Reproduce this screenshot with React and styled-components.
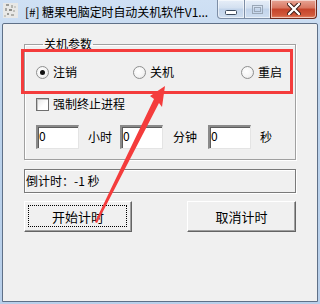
import React from "react";
import styled, { createGlobalStyle } from "styled-components";

const GlobalStyle = createGlobalStyle`
  html, body {
    margin: 0;
    padding: 0;
    background: #ffffff;
  }
  * {
    box-sizing: border-box;
  }
`;

const font = `"Noto Sans CJK SC", "Liberation Sans", sans-serif`;

// window frame
const Window = styled.div`
  position: relative;
  width: 320px;
  height: 304px;
  display: flex;
  flex-direction: column;
  background: linear-gradient(180deg, #cfe0f4 0%, #bcd3ec 30%, #b8cfea 100%);
  font-family: ${font};
  font-size: 12px;
  color: #000;
  overflow: hidden;
`;

const TitleBar = styled.div`
  height: 23px;
  display: flex;
  align-items: flex-start;
  flex-shrink: 0;
`;

const AppIcon = styled.div`
  width: 15px;
  height: 15px;
  margin: 3px 0 0 3px;
  display: flex;
`;

const Title = styled.div`
  margin-left: 7px;
  line-height: 24px;
  white-space: nowrap;
  letter-spacing: -0.1px;
`;

const Captions = styled.div`
  margin-left: auto;
  margin-right: 3px;
  display: flex;
`;

const CaptionButton = styled.div`
  width: ${(p) => p.$w}px;
  height: 19px;
  display: flex;
  align-items: center;
  justify-content: center;
  border: 1px solid #7d8ea6;
  border-top: none;
  margin-left: -1px;
  background: linear-gradient(180deg, #e6eef8 0%, #d3e0f0 45%, #c1d3ea 50%, #cfdef0 100%);
  border-radius: ${(p) => p.$radius || "0"};
  box-shadow: inset 0 0 0 1px rgba(255, 255, 255, 0.55);
`;

const CloseButton = styled(CaptionButton)`
  background: linear-gradient(180deg, #e7a596 0%, #d8755f 45%, #c5432a 50%, #d15a3c 85%, #e38a6c 100%);
  border-color: #6e2a1e;
`;

// client area
const Client = styled.div`
  flex: 1;
  margin: 0 2px 2px 2px;
  border: 1px solid #5f7087;
  border-radius: 2px 2px 0 0;
  background: #f0f0f0;
  padding: 13px 0 0 21px;
  display: flex;
  flex-direction: column;
`;

const Group = styled.fieldset`
  width: 272px;
  height: 123px;
  margin: 0;
  padding: 0 0 0 11px;
  border: 1px solid #a0a0a0;
  box-shadow: inset 1px 1px 0 #fff, 1px 1px 0 #fff;
  min-width: 0;
`;

const Legend = styled.legend`
  margin-left: 7px;
  padding: 0 1px;
  line-height: 14px;
  color: #000;
`;

const RadioRow = styled.div`
  margin-top: 14px;
  display: grid;
  grid-template-columns: 97px 108px auto;
  height: 14px;
  align-items: center;
`;

const Option = styled.label`
  display: flex;
  align-items: center;
  gap: 4px;
  line-height: 14px;
  white-space: nowrap;
`;

const RadioDot = styled.span`
  width: 13px;
  height: 13px;
  border-radius: 50%;
  border: 1px solid #8e8f8f;
  background: radial-gradient(circle at 40% 40%, #ffffff 0%, #f4f4f4 55%, #dcdcdc 100%);
  display: flex;
  align-items: center;
  justify-content: center;
  flex-shrink: 0;
  &::after {
    content: "";
    width: 5px;
    height: 5px;
    border-radius: 50%;
    background: ${(p) => (p.$checked ? "#111" : "transparent")};
  }
`;

const CheckRow = styled.div`
  margin-top: 18px;
  display: flex;
`;

const CheckBox = styled.span`
  width: 13px;
  height: 13px;
  border: 1px solid #6f6f6f;
  background: linear-gradient(135deg, #e6e6e6 0%, #ffffff 60%);
  box-shadow: inset 1px 1px 0 #c4c4c4;
  flex-shrink: 0;
`;

const TimeRow = styled.div`
  margin-top: 14px;
  display: flex;
  align-items: center;
`;

const Field = styled.div`
  width: 43px;
  height: 24px;
  background: #fff;
  border-top: 2px solid #8a8a8a;
  border-left: 2px solid #8a8a8a;
  border-right: 1px solid #e4e4e4;
  border-bottom: 1px solid #e4e4e4;
  box-shadow: inset 1px 1px 0 #5c5c5c;
  padding: 1px 0 0 1px;
  line-height: 16px;
  flex-shrink: 0;
`;

const Unit = styled.span`
  width: ${(p) => p.$w}px;
  padding-left: ${(p) => p.$pl}px;
  line-height: 14px;
  white-space: nowrap;
  flex-shrink: 0;
`;

const Status = styled.div`
  margin-top: 9px;
  width: 272px;
  height: 24px;
  border: 1px solid #7a7a7a;
  box-shadow: 1px 1px 0 #fff, inset 1px 1px 0 #fff;
  line-height: 22px;
  padding-left: 1px;
`;

const ButtonRow = styled.div`
  margin-top: 8px;
  width: 272px;
  display: flex;
  justify-content: space-between;
`;

const Button = styled.div`
  position: relative;
  width: ${(p) => p.$w}px;
  height: 31px;
  display: flex;
  align-items: center;
  justify-content: center;
  background: #f0f0f0;
  border-top: 1px solid #ffffff;
  border-left: 1px solid #ffffff;
  border-right: 1px solid #646464;
  border-bottom: 1px solid #646464;
  box-shadow: inset -1px -1px 0 #a0a0a0;
  font-size: 13px;
  &::before {
    content: "";
    display: ${(p) => (p.$focused ? "block" : "none")};
    position: absolute;
    inset: 3px 4px 4px 3px;
    border: 1px dotted #000;
  }
`;

// annotations drawn over the window
const Highlight = styled.div`
  position: absolute;
  left: 21px;
  top: 49px;
  width: 272px;
  height: 45px;
  border: 3px solid #f43c3c;
  pointer-events: none;
`;

const ArrowLayer = styled.svg`
  position: absolute;
  left: 0;
  top: 0;
  pointer-events: none;
`;

const TitleIcon = () => (
  <svg width="15" height="15" viewBox="0 0 15 15">
    <rect width="15" height="15" fill="#e8e8e6" />
    <rect x="3" y="1" width="3" height="2" fill="#9c9c98" />
    <rect x="8" y="2" width="2" height="3" fill="#b5b5b0" />
    <rect x="2" y="5" width="2" height="3" fill="#a8a8a4" />
    <rect x="6" y="6" width="3" height="2" fill="#8d8d89" />
    <rect x="10" y="7" width="2" height="2" fill="#c0c0bb" />
    <rect x="4" y="10" width="2" height="2" fill="#9a9a96" />
    <rect x="8" y="11" width="3" height="2" fill="#b0b0ab" />
    <rect x="11" y="3" width="2" height="2" fill="#cacac6" />
    <rect x="1" y="12" width="2" height="2" fill="#c6c6c2" />
  </svg>
);

const MinGlyph = () => (
  <svg width="12" height="6" viewBox="0 0 12 6" style={{ marginTop: 7 }}>
    <rect x="0.5" y="0.5" width="11" height="4" rx="1" fill="#fff" stroke="#3c4a5c" />
  </svg>
);

const MaxGlyph = () => (
  <svg width="11" height="9" viewBox="0 0 11 9">
    <rect x="0.5" y="0.5" width="10" height="8" fill="none" stroke="#9aa7b7" />
    <rect x="2.5" y="2.5" width="6" height="4" fill="none" stroke="#9aa7b7" />
  </svg>
);

const CloseGlyph = () => (
  <svg width="14" height="12" viewBox="0 0 14 12">
    <path d="M2 1 L12 11 M12 1 L2 11" stroke="#3a1a14" strokeWidth="4.2" strokeLinecap="round" />
    <path d="M2 1 L12 11 M12 1 L2 11" stroke="#ffffff" strokeWidth="2.4" strokeLinecap="round" />
  </svg>
);

export default function App() {
  return (
    <>
      <GlobalStyle />
      <Window>
        <TitleBar>
          <AppIcon>
            <TitleIcon />
          </AppIcon>
          <Title>[#] 糖果电脑定时自动关机软件V1...</Title>
          <Captions>
            <CaptionButton $w={28} $radius="0 0 0 4px">
              <MinGlyph />
            </CaptionButton>
            <CaptionButton $w={27}>
              <MaxGlyph />
            </CaptionButton>
            <CloseButton $w={47} $radius="0 0 4px 0">
              <CloseGlyph />
            </CloseButton>
          </Captions>
        </TitleBar>

        <Client>
          <Group>
            <Legend>关机参数</Legend>
            <RadioRow>
              <Option>
                <RadioDot $checked />
                注销
              </Option>
              <Option>
                <RadioDot />
                关机
              </Option>
              <Option>
                <RadioDot />
                重启
              </Option>
            </RadioRow>
            <CheckRow>
              <Option>
                <CheckBox />
                强制终止进程
              </Option>
            </CheckRow>
            <TimeRow>
              <Field>0</Field>
              <Unit $w={41} $pl={9}>小时</Unit>
              <Field>0</Field>
              <Unit $w={45} $pl={10}>分钟</Unit>
              <Field>0</Field>
              <Unit $w={30} $pl={9}>秒</Unit>
            </TimeRow>
          </Group>

          <Status>倒计时：-1 秒</Status>

          <ButtonRow>
            <Button $w={108} $focused>
              开始计时
            </Button>
            <Button $w={109}>取消计时</Button>
          </ButtonRow>
        </Client>

        <Highlight />
        <ArrowLayer width="320" height="304" viewBox="0 0 320 304">
          <polygon
            points="165,86 162,107 159,103 97,223 95,222 154,99 150,96"
            fill="#f43c3c"
          />
        </ArrowLayer>
      </Window>
    </>
  );
}
